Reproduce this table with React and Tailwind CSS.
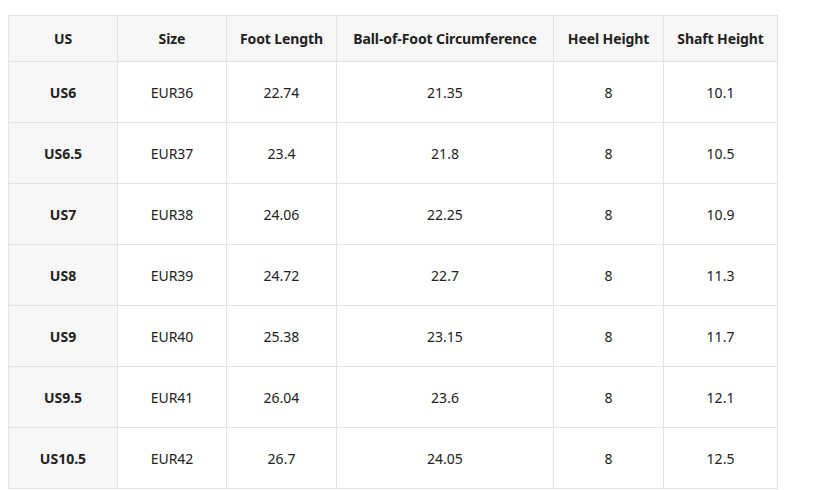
const headers = ["US", "Size", "Foot Length", "Ball-of-Foot Circumference", "Heel Height", "Shaft Height"];
const widths = ["w-[109px]", "w-[109px]", "w-[110px]", "w-[217px]", "w-[110px]", "w-[114px]"];

const rows = [
  ["US6", "EUR36", "22.74", "21.35", "8", "10.1"],
  ["US6.5", "EUR37", "23.4", "21.8", "8", "10.5"],
  ["US7", "EUR38", "24.06", "22.25", "8", "10.9"],
  ["US8", "EUR39", "24.72", "22.7", "8", "11.3"],
  ["US9", "EUR40", "25.38", "23.15", "8", "11.7"],
  ["US9.5", "EUR41", "26.04", "23.6", "8", "12.1"],
  ["US10.5", "EUR42", "26.7", "24.05", "8", "12.5"],
];

export default function App() {
  return (
    <div className="w-[821px] h-[490px] bg-white overflow-hidden pl-2 pt-[15px] text-[14px] text-[#222]" style={{ fontFamily: '"Noto Sans", "Open Sans", sans-serif' }}>
      <table className="border-collapse table-fixed w-[770px]">
        <thead>
          <tr className="h-[46px] bg-[#f7f7f7]">
            {headers.map((h, i) => (
              <th key={h} className={`${widths[i]} border border-[#e3e3e3] font-bold text-center p-0 tracking-[-0.1px]`}>
                {h}
              </th>
            ))}
          </tr>
        </thead>
        <tbody>
          {rows.map((r) => (
            <tr key={r[0]} className="h-[61px]">
              {r.map((c, i) => (
                <td
                  key={i}
                  className={`border border-[#e3e3e3] text-center p-0 ${i === 0 ? "font-bold bg-[#f7f7f7]" : "font-normal"}`}
                >
                  {c}
                </td>
              ))}
            </tr>
          ))}
        </tbody>
      </table>
    </div>
  );
}
